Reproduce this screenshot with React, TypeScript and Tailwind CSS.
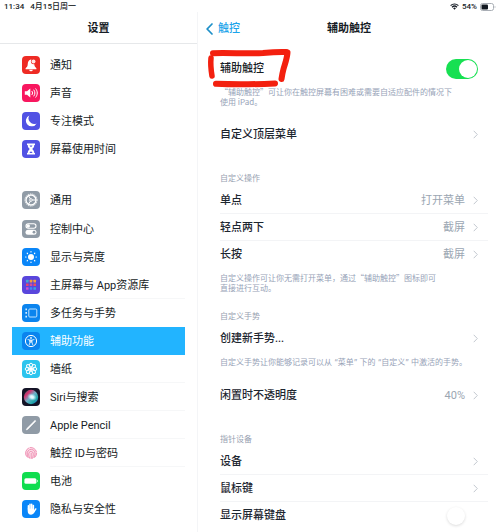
import type { ReactNode } from "react";

const FONT = "font-[Roboto,'Noto_Sans_CJK_SC',sans-serif]";

function Tile({ color, children }: { color: string; children: ReactNode }) {
  return (
    <span className={`block size-[18px] shrink-0 overflow-hidden rounded-[4px] ${color}`}>
      <svg viewBox="0 0 18 18" className="size-full" fill="none" stroke="none" aria-hidden="true">
        {children}
      </svg>
    </span>
  );
}

const icons: Record<string, ReactNode> = {
  bell: (
    <Tile color="bg-[#ee2b24]">
      <path d="M9 3.400C6.800 3.800 5.900 5.600 5.800 7.600c-.1 2.600-.7 3.500-2.200 4.700v1h10.800v-1c-1.300-1.100-2-2.200-2.200-4.200L9.800 4z" fill="#fff" />
      <path d="M7.200 13.800h3.600a1.800 1.500 0 0 1-3.600 0z" fill="#fff" />
      <circle cx="11.500" cy="5.600" r="2.600" fill="#ee2b24" />
      <circle cx="11.500" cy="5.600" r="2" fill="#ffe6e3" />
    </Tile>
  ),
  sound: (
    <Tile color="bg-[#f8175f]">
      <path d="M2.800 7.200h2.200L8.300 4.400v9.200L5 10.800H2.800z" fill="#fff" />
      <g stroke="#fff" strokeWidth="1" strokeLinecap="round">
        <path d="M10 7.300c.8 1 .8 2.400 0 3.400M11.900 6c1.400 1.800 1.400 4.200 0 6M13.800 4.800c2 2.600 2 5.800 0 8.400" />
      </g>
    </Tile>
  ),
  moon: (
    <Tile color="bg-[#5152e4]">
      <path d="M7.400 3.400a5.700 5.700 0 1 0 7.200 8A5.600 5.600 0 0 1 7.400 3.400z" fill="#fff" />
    </Tile>
  ),
  hourglass: (
    <Tile color="bg-[#5152e4]">
      <path d="M5 3.400h8v1.500h-.7c0 2-1 3-2.100 4.100 1.100 1.100 2.100 2.100 2.100 4.100h.7v1.500H5v-1.500h.7c0-2 1-3 2.100-4.100-1.100-1.100-2.100-2.100-2.100-4.100H5z" fill="#fff" />
      <path d="M7.500 5.400h3L9 7.200zM7.300 13L9 11.200l1.700 1.800z" fill="#5152e4" />
    </Tile>
  ),
  gear: (
    <Tile color="bg-[#909ba6]">
      <circle cx="9" cy="9" r="5" stroke="#fff" strokeWidth="1.400" />
      <circle cx="9" cy="9" r="6.100" stroke="#fff" strokeWidth="1" strokeDasharray="1 .92" />
      <circle cx="9" cy="9" r="1.300" stroke="#fff" strokeWidth=".9" />
      <path d="M10.300 9H14M8.400 7.900L6.500 4.700M8.400 10.100l-1.900 3.200" stroke="#fff" strokeWidth="1" />
    </Tile>
  ),
  control: (
    <Tile color="bg-[#909ba6]">
      <rect x="4" y="3.800" width="10" height="4.400" rx="2.200" stroke="#fff" strokeWidth="1.100" />
      <circle cx="6.200" cy="6" r="1.800" fill="#fff" />
      <rect x="3.500" y="9.700" width="11" height="5" rx="2.500" fill="#fff" />
      <circle cx="12" cy="12.200" r="1.400" fill="#909ba6" />
    </Tile>
  ),
  sun: (
    <Tile color="bg-[#0a86f8]">
      <circle cx="9" cy="9" r="3" fill="#fff" />
      <g stroke="#fff" strokeWidth="1.200" strokeLinecap="round">
        <path d="M9 3.600v.4M9 14v.4M3.600 9H4M14 9h.4M5.200 5.200l.3.3M12.500 12.500l.3.3M12.800 5.200l-.3.3M5.500 12.500l-.3.3" />
      </g>
    </Tile>
  ),
  apps: (
    <Tile color="bg-[#5946dc]">
      <rect x="4" y="3.800" width="2.600" height="2.600" rx=".5" fill="#3fa9d5" />
      <rect x="7.700" y="3.800" width="2.600" height="2.600" rx=".5" fill="#f59a3c" />
      <rect x="11.400" y="3.800" width="2.600" height="2.600" rx=".5" fill="#f5a13c" />
      <rect x="4" y="7.500" width="2.600" height="2.600" rx=".5" fill="#e8476c" />
      <rect x="7.700" y="7.500" width="2.600" height="2.600" rx=".5" fill="#d0509f" />
      <rect x="11.400" y="7.500" width="2.600" height="2.600" rx=".5" fill="#ef4f5b" />
      <rect x="4" y="11.200" width="2.600" height="2.600" rx=".5" fill="#d04fd0" />
      <rect x="7.700" y="11.200" width="2.600" height="2.600" rx=".5" fill="#3f8cf5" />
      <rect x="11.400" y="11.200" width="2.600" height="2.600" rx=".5" fill="#36a6d8" />
    </Tile>
  ),
  multitask: (
    <Tile color="bg-[#0b84ee]">
      <rect x="6.800" y="5" width="8" height="8" rx="1" stroke="#bfe2ff" strokeWidth="1" />
      <path d="M3.400 4.500H5v1.700H3.400zM3.400 8.100H5v1.700H3.400zM3.400 11.700H5v1.700H3.400z" fill="#d5ecff" />
    </Tile>
  ),
  access: (
    <Tile color="bg-[#0a84ee]">
      <circle cx="9" cy="9" r="5.600" stroke="#fff" strokeWidth="1" />
      <circle cx="9" cy="5.900" r=".9" fill="#fff" />
      <path d="M6 7.600l2.200.5v1.700l-.9 2.800M12 7.600l-2.200.5v1.700l.9 2.800M8.200 8.100h1.600v2H8.200z" stroke="#fff" strokeWidth=".8" strokeLinecap="round" />
    </Tile>
  ),
  flower: (
    <Tile color="bg-[#2cc4ee]">
      <g stroke="#fff" strokeWidth="1">
        {[0, 45, 90, 135, 180, 225, 270, 315].map((a) => (
          <ellipse key={a} cx="9" cy="5.300" rx="1.600" ry="2.100" transform={`rotate(${a} 9 9)`} />
        ))}
      </g>
      <circle cx="9" cy="9" r="1.500" fill="#fff" />
    </Tile>
  ),
  siri: (
    <Tile color="bg-[#131326]">
      <defs>
        <linearGradient id="siri" x1="0" y1="0" x2="1" y2="1">
          <stop offset="0" stopColor="#10806e" />
          <stop offset=".25" stopColor="#d8306e" />
          <stop offset=".5" stopColor="#6fb0c8" />
          <stop offset=".75" stopColor="#20a8a8" />
          <stop offset="1" stopColor="#2a4be0" />
        </linearGradient>
        <radialGradient id="siri-glow">
          <stop offset="0" stopColor="#fff" />
          <stop offset=".4" stopColor="#d8f6ff" stopOpacity=".9" />
          <stop offset="1" stopColor="#8fe0f0" stopOpacity="0" />
        </radialGradient>
      </defs>
      <circle cx="9" cy="9" r="7.200" fill="url(#siri)" />
      <ellipse cx="10" cy="9" rx="5" ry="3.600" transform="rotate(20 10 9)" fill="url(#siri-glow)" />
    </Tile>
  ),
  pencil: (
    <Tile color="bg-[#909ba6]">
      <path d="M4.200 13.900l.6-1.400 8.300-8.200.8.800-8.200 8.300z" fill="#fff" stroke="#fff" strokeWidth=".5" />
    </Tile>
  ),
  touch: (
    <Tile color="bg-white">
      <circle cx="9" cy="9" r="5.600" fill="#fbdfe9" />
      <g stroke="#ee7fa8" strokeWidth=".8" strokeLinecap="round">
        <path d="M4.400 12.300a5.600 5.600 0 0 1 2.200-8.200M8 3.500a5.600 5.600 0 0 1 6.400 4.100M14.600 9c0 1.600-.5 2.900-1.300 3.900" />
        <path d="M6 13.500C5 11 4.800 8.800 6 7a3.900 3.900 0 0 1 6.800.8c.5 1.600.2 3.800-.7 5.800" />
        <path d="M7.700 14.300C6.600 12 6.400 9.800 7.200 8.400a2.200 2.200 0 0 1 4 .8c.2 1.700-.1 3.500-.8 5.200M9.200 9.200c-.1 2 0 3.600.1 5.200" />
      </g>
    </Tile>
  ),
  battery: (
    <Tile color="bg-[#0fdd4f]">
      <rect x="2.400" y="6.200" width="12" height="5.600" rx="1.500" fill="#fff" />
      <path d="M15.100 7.700c1.100.4 1.100 2.200 0 2.600z" fill="#fff" />
    </Tile>
  ),
  hand: (
    <Tile color="bg-[#0a86f8]">
      <g stroke="#fff" strokeWidth="1.500" strokeLinecap="round">
        <path d="M6.400 9V5.700M8 8.500V4.300M9.700 8.500V4.300M11.400 9V5.500M12 11.600l1.700-2.600" />
      </g>
      <path d="M5.700 8.400h6.400v2.800l.9-.6c-.6 2.500-1.700 4.100-3.900 4.100-2.200 0-3.400-1.500-3.400-3.700z" fill="#fff" />
    </Tile>
  ),
};

type NavEntry = { icon: string; label: string; active?: boolean; divided?: boolean };

const alerts: NavEntry[] = [
  { icon: "bell", label: "通知" },
  { icon: "sound", label: "声音" },
  { icon: "moon", label: "专注模式" },
  { icon: "hourglass", label: "屏幕使用时间" },
];

const system: NavEntry[] = [
  { icon: "control", label: "控制中心" },
  { icon: "sun", label: "显示与亮度" },
  { icon: "apps", label: "主屏幕与 App资源库", divided: true },
  { icon: "multitask", label: "多任务与手势" },
  { icon: "access", label: "辅助功能", active: true },
  { icon: "flower", label: "墙纸", divided: true },
  { icon: "siri", label: "Siri与搜索", divided: true },
  { icon: "pencil", label: "Apple Pencil", divided: true },
  { icon: "touch", label: "触控 ID与密码", divided: true },
  { icon: "battery", label: "电池" },
  { icon: "hand", label: "隐私与安全性" },
];

function NavItem({ icon, label, active, divided }: NavEntry) {
  return (
    <li>
      <a
        href="#"
        aria-current={active ? "page" : undefined}
        className={`flex h-7 items-center gap-[10px] pl-[10px] text-[11px] whitespace-nowrap ${
          active ? "bg-[#22b4ff] text-white" : "text-[#171d26]"
        }`}
      >
        {icons[icon]}
        <span
          className={`flex h-full flex-1 items-center border-b pt-[3px] ${
            divided ? "border-[#f6f7f8]" : "border-transparent"
          }`}
        >
          {label}
        </span>
      </a>
    </li>
  );
}

function Chevron() {
  return (
    <svg viewBox="0 0 5 9" className="h-[9px] w-[5px] shrink-0" fill="none" aria-hidden="true">
      <path d="M.7.8l3.600 3.700L.7 8.200" stroke="#c3c8cf" strokeWidth="1" />
    </svg>
  );
}

function Row({ label, value, divided }: { label: string; value?: string; divided?: boolean }) {
  return (
    <button
      type="button"
      className={`flex h-[27px] w-full items-center border-b pr-[10px] text-left text-[11px] font-medium text-[#1d2630] ${
        divided ? "border-[#f3f4f6]" : "border-transparent"
      }`}
    >
      <span className="flex-1 pt-0.5">{label}</span>
      {value && <span className="mr-2 pt-0.5 font-normal text-[#9ba6b2]">{value}</span>}
      <Chevron />
    </button>
  );
}

function Heading({ children }: { children: ReactNode }) {
  return <h2 className="mb-[3px] text-[8px] leading-[10px] text-[#97a1b1]">{children}</h2>;
}

function Note({ children, narrowQuotes }: { children: ReactNode; narrowQuotes?: boolean }) {
  return (
    <p
      className={`mt-[5px] text-[8px] leading-[10px] text-[#97a3b8] ${
        narrowQuotes ? "font-[Inter,'Noto_Sans_CJK_SC',sans-serif]" : "font-['Noto_Sans_CJK_SC',sans-serif]"
      }`}
    >
      {children}
    </p>
  );
}

export default function App() {
  return (
    <div lang="zh-CN" className={`flex min-h-screen flex-col bg-white text-[#171d26] ${FONT}`}>
      <div className="flex h-3 items-center justify-between px-1 pt-px text-[8px] leading-3 font-medium">
        <div className="flex gap-[6px]">
          <span>11:34</span>
          <span>4月15日周一</span>
        </div>
        <div className="flex items-center gap-[3px]">
          <svg viewBox="0 0 9 7" className="h-[7px] w-[9px]" fill="none" aria-hidden="true">
            <path d="M.6 2.600a5.600 5.600 0 0 1 7.800 0M2 4.200a3.600 3.600 0 0 1 5 0" stroke="#171d26" strokeWidth="1.200" />
            <path d="M4.500 6.800L3.100 5.300a2 2 0 0 1 2.800 0z" fill="#171d26" />
          </svg>
          <span>54%</span>
          <svg viewBox="0 0 16 8" className="h-2 w-4" fill="none" aria-hidden="true">
            <rect x=".5" y=".5" width="13" height="7" rx="2" stroke="#a9aeb5" />
            <rect x="1.500" y="1.500" width="6.500" height="5" rx="1" fill="#111820" />
            <path d="M14.700 2.800c1 .4 1 2 0 2.400z" fill="#a9aeb5" />
          </svg>
        </div>
      </div>

      <div className="flex flex-1">
        <aside className="w-[198px] shrink-0 border-r border-[#f4f5f7]">
          <header className="flex h-8 items-center justify-center border-b border-[#e6e8ea] pt-[3px]">
            <h1 className="text-[11px] font-bold">设置</h1>
          </header>
          <nav aria-label="设置" className="pt-[7px] pr-3 pl-3">
            <ul>
              {alerts.map((e) => (
                <NavItem key={e.icon} {...e} />
              ))}
            </ul>
            <ul className="mt-[23px] mb-px">
              <NavItem icon="gear" label="通用" />
            </ul>
            <ul>
              {system.map((e) => (
                <NavItem key={e.icon} {...e} />
              ))}
            </ul>
          </nav>
        </aside>

        <main className="min-w-0 flex-1">
          <header className="grid h-8 grid-cols-[1fr_auto_1fr] items-center px-2 pt-0.5 text-[11px]">
            <a href="#" className="flex items-center gap-[5px] font-medium text-[#1da4ea]">
              <svg viewBox="0 0 7 12" className="h-3 w-[7px]" fill="none" aria-hidden="true">
                <path d="M6 1L1.200 6 6 11" stroke="#1d8fc8" strokeWidth="1.700" strokeLinecap="round" />
              </svg>
              触控
            </a>
            <h1 className="font-bold">辅助触控</h1>
          </header>

          <div className="pt-[11px] pr-3 pl-[22px]">
            <section>
              <div className="relative flex h-[27px] items-center justify-between pr-[10px] text-[11px] font-medium">
                <label htmlFor="assistive" className="pt-0.5">
                  辅助触控
                </label>
                <input
                  id="assistive"
                  type="checkbox"
                  role="switch"
                  defaultChecked
                  className="h-5 w-8 appearance-none rounded-full bg-[#d9dce0] before:m-px before:block before:size-[18px] before:rounded-full before:bg-white checked:bg-[#17e052] checked:before:ml-[13px]"
                />
                <svg viewBox="0 0 86 40" className="pointer-events-none absolute -top-[6px] -left-[13px] h-10 w-[86px]" fill="none" aria-hidden="true">
                  <g stroke="#f3200f" strokeLinecap="round" strokeLinejoin="round">
                    <path d="M6 4.200C24 3.600 40 5 56 4c8-.7 15-1.200 23-.9" strokeWidth="6" />
                    <path d="M4 9c-.6 6 0 12 1 18" strokeWidth="5.500" />
                    <path d="M80.500 3.500c-.4 6-2.500 11-4 16.500-.8 3-1.500 6.500-2 10" strokeWidth="6" />
                    <path d="M9 34.800c19 .8 39 .6 59-.4" strokeWidth="6" />
                  </g>
                </svg>
              </div>
              <Note>
                “辅助触控”可让你在触控屏幕有困难或需要自适应配件的情况下
                <br />
                使用 iPad。
              </Note>
            </section>

            <section className="mt-[14px]">
              <Row label="自定义顶层菜单" />
            </section>

            <section className="mt-[26px]">
              <Heading>自定义操作</Heading>
              <Row label="单点" value="打开菜单" divided />
              <Row label="轻点两下" value="截屏" divided />
              <Row label="长按" value="截屏" />
              <Note>
                自定义操作可让你无需打开菜单，通过“辅助触控”图标即可
                <br />
                直接进行互动。
              </Note>
            </section>

            <section className="mt-[19px]">
              <Heading>自定义手势</Heading>
              <Row label="创建新手势..." />
              <Note narrowQuotes>自定义手势让你能够记录可以从 “菜单” 下的 “自定义” 中激活的手势。</Note>
            </section>

            <section className="mt-[15px]">
              <Row label="闲置时不透明度" value="40%" />
            </section>

            <section className="mt-[26px]">
              <Heading>指针设备</Heading>
              <Row label="设备" divided />
              <Row label="鼠标键" divided />
              <div className="flex h-[27px] items-center justify-between pr-[10px] text-[11px] font-medium text-[#1d2630]">
                <label htmlFor="keyboard" className="pt-0.5">
                  显示屏幕键盘
                </label>
                <input
                  id="keyboard"
                  type="checkbox"
                  role="switch"
                  className="h-5 w-8 appearance-none rounded-full bg-white before:m-px before:block before:size-[18px] before:rounded-full before:bg-white before:shadow-[0_1px_3px_rgba(0,0,0,0.14)] checked:bg-[#17e052] checked:before:ml-[13px]"
                />
              </div>
            </section>
          </div>
        </main>
      </div>
    </div>
  );
}
